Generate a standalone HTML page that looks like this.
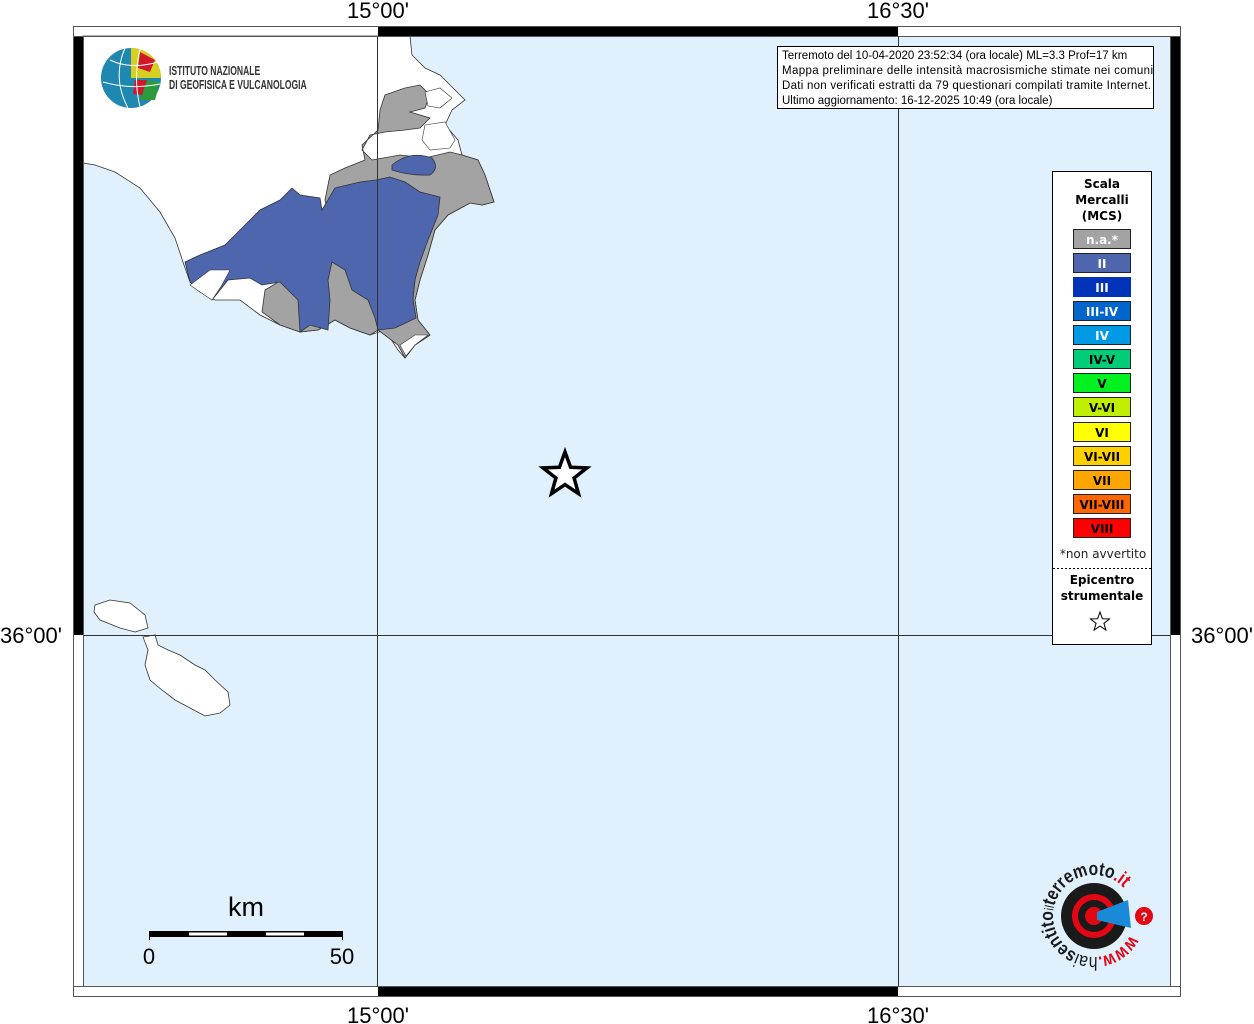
<!DOCTYPE html>
<html><head><meta charset="utf-8"><style>
html,body{margin:0;padding:0;background:#fff;width:1254px;height:1024px;overflow:hidden}
svg{display:block}
</style></head><body>
<svg width="1254" height="1024" viewBox="0 0 1254 1024" xmlns="http://www.w3.org/2000/svg" font-family="Liberation Sans, sans-serif">
<rect x="83" y="36" width="1088" height="951" fill="#e0f1fd"/>
<path d="M83,36 L410,36 L412,55 L425,68 L440,75 L455,90 L465,100 L452,110 L445,125 L458,140 L462,155 L478,160 L485,175 L494,202 L482,205 L470,203 L448,215 L435,230 L428,255 L420,280 L415,300 L418,320 L430,335 L415,345 L405,358 L398,350 L385,330 L370,335 L350,328 L335,320 L318,330 L300,332 L280,325 L260,315 L240,300 L215,300 L200,292 L190,282 L183,262 L175,238 L160,212 L140,188 L115,172 L95,165 L83,163 Z" fill="#fff" stroke="#333" stroke-width="0.8"/>
<path d="M385,95 L405,88 L420,85 L430,95 L425,108 L410,112 L430,118 L420,128 L405,130 L385,132 L370,135 L362,150 L372,160 L400,155 L425,158 L450,152 L462,155 L478,160 L485,175 L494,202 L482,205 L470,203 L448,215 L435,230 L428,255 L420,280 L415,300 L418,320 L430,335 L415,345 L405,358 L398,345 L378,330 L370,335 L350,328 L335,320 L318,330 L300,332 L280,325 L262,312 L265,290 L290,275 L320,270 L330,260 L325,245 L330,225 L325,200 L330,175 L345,168 L365,160 L362,145 L378,130 L380,110 Z" fill="#a3a3a3" stroke="#333" stroke-width="0.8"/>
<path d="M185,262 L200,255 L225,245 L248,222 L260,210 L280,200 L292,188 L300,195 L320,198 L322,210 L335,188 L360,182 L376,180 L390,177 L405,182 L420,192 L440,197 L438,215 L428,240 L420,262 L415,280 L413,300 L416,318 L395,328 L378,330 L375,318 L368,300 L352,290 L345,270 L332,262 L328,280 L330,300 L328,330 L310,325 L300,332 L298,300 L280,282 L262,285 L250,278 L228,280 L212,300 L200,290 L190,282 Z" fill="#4d66ad" stroke="#333" stroke-width="0.8"/>
<path d="M392,165 Q410,150 432,158 Q440,168 430,175 Q410,176 392,170 Z" fill="#4d66ad" stroke="#333" stroke-width="0.8"/>
<path d="M190,285 L210,270 L230,270 L222,285 L212,300 L200,292 Z" fill="#fff" stroke="#333" stroke-width="0.6"/>
<path d="M425,125 L445,122 L455,140 L450,148 L430,150 L422,140 Z" fill="#fff" stroke="#333" stroke-width="0.6"/>
<path d="M425,92 L440,88 L452,98 L440,108 L428,106 Z" fill="#fff" stroke="#333" stroke-width="0.6"/>
<path d="M400,345 L415,335 L428,335 L415,345 L406,356 Z" fill="#fff" stroke="#333" stroke-width="0.6"/>
<path d="M95,605 L110,600 L130,603 L145,615 L148,628 L135,632 L120,628 L100,620 L94,612 Z" fill="#fff" stroke="#333" stroke-width="0.8"/>
<path d="M143,637 L155,635 L158,645 L168,650 L180,655 L195,665 L205,670 L215,680 L228,692 L230,705 L220,713 L205,716 L190,708 L175,700 L162,690 L150,680 L145,665 L148,650 Z" fill="#fff" stroke="#333" stroke-width="0.8"/>
<line x1="377.5" y1="36" x2="377.5" y2="987" stroke="#333" stroke-width="1"/>
<line x1="898.5" y1="36" x2="898.5" y2="987" stroke="#333" stroke-width="1"/>
<line x1="83" y1="635.5" x2="1171" y2="635.5" stroke="#333" stroke-width="1"/>
<rect x="73.5" y="26.5" width="1107" height="970" fill="none" stroke="#555" stroke-width="1"/>
<rect x="83.5" y="36.5" width="1087" height="950" fill="none" stroke="#555" stroke-width="1"/>
<rect x="378" y="27" width="520" height="9" fill="#000"/>
<rect x="378" y="987" width="520" height="9" fill="#000"/>
<rect x="74" y="36" width="9" height="599" fill="#000"/>
<rect x="1171" y="36" width="9" height="599" fill="#000"/>
<line x1="73" y1="36.5" x2="83" y2="36.5" stroke="#555"/>
<line x1="1171" y1="36.5" x2="1181" y2="36.5" stroke="#555"/>
<line x1="73" y1="986.5" x2="83" y2="986.5" stroke="#555"/>
<line x1="1171" y1="986.5" x2="1181" y2="986.5" stroke="#555"/>
<g font-size="22" fill="#000" text-anchor="middle">
<text x="378" y="18">15°00'</text>
<text x="898" y="18">16°30'</text>
<text x="378" y="1023">15°00'</text>
<text x="898" y="1023">16°30'</text>
<text x="31" y="643">36°00'</text>
<text x="1222" y="643">36°00'</text>
</g>
<g>
<circle cx="131" cy="78" r="30" fill="#1e88b0"/>
<path d="M131,48 A30,30 0 0 1 161,78 L131,78 Z" fill="#d8d020"/>
<path d="M140,52 L155,60 L150,72 L138,68 Z" fill="#d0182a"/>
<path d="M145,80 L160,82 L155,100 L140,100 Z" fill="#2a9a3a"/>
<path d="M135,80 L147,80 L142,95 L133,94 Z" fill="#d0182a"/>
<path d="M110,60 Q131,70 158,62 M103,82 Q131,90 160,84 M125,48 Q112,78 128,108 M140,49 Q133,78 140,107" fill="none" stroke="#fff" stroke-width="1"/>
<g transform="translate(169,0) scale(0.66,1)" font-size="13" fill="#333" font-weight="bold">
<text x="0" y="75">ISTITUTO NAZIONALE</text>
<text x="0" y="89">DI GEOFISICA E VULCANOLOGIA</text>
</g>
</g>
<rect x="777.5" y="46.5" width="376" height="62" fill="#fff" stroke="#000" stroke-width="1"/>
<g font-size="11.5" fill="#000">
<text x="782" y="59">Terremoto del 10-04-2020 23:52:34 (ora locale) ML=3.3 Prof=17 km</text>
<text x="782" y="74" textLength="371">Mappa preliminare delle intensità macrosismiche stimate nei comuni</text>
<text x="782" y="89" textLength="369">Dati non verificati estratti da 79 questionari compilati tramite Internet.</text>
<text x="782" y="104">Ultimo aggiornamento: 16-12-2025 10:49 (ora locale)</text>
</g>
<rect x="1052.5" y="171.5" width="99" height="473" fill="#fff" stroke="#000" stroke-width="1"/>
<g font-family="DejaVu Sans, sans-serif" font-weight="bold" font-size="12" text-anchor="middle" fill="#000">
<text x="1102" y="188">Scala</text>
<text x="1102" y="204">Mercalli</text>
<text x="1102" y="220">(MCS)</text>
</g>
<g font-family="DejaVu Sans, sans-serif" font-weight="bold" font-size="12" text-anchor="middle">
<rect x="1073.5" y="229.5" width="57" height="19" fill="#a3a3a3" stroke="#222" stroke-width="1"/><text x="1102" y="244" fill="#fff">n.a.*</text>
<rect x="1073.5" y="253.5" width="57" height="19" fill="#4d66ad" stroke="#222" stroke-width="1"/><text x="1102" y="268" fill="#fff">II</text>
<rect x="1073.5" y="277.5" width="57" height="19" fill="#0033b8" stroke="#0033b8" stroke-width="1"/><text x="1102" y="292" fill="#fff">III</text>
<rect x="1073.5" y="301.5" width="57" height="19" fill="#0066cc" stroke="#222" stroke-width="1"/><text x="1102" y="316" fill="#fff">III-IV</text>
<rect x="1073.5" y="325.5" width="57" height="19" fill="#0099e6" stroke="#222" stroke-width="1"/><text x="1102" y="340" fill="#fff">IV</text>
<rect x="1073.5" y="349.5" width="57" height="19" fill="#00cc77" stroke="#222" stroke-width="1"/><text x="1102" y="364" fill="#000">IV-V</text>
<rect x="1073.5" y="373.5" width="57" height="19" fill="#00f020" stroke="#222" stroke-width="1"/><text x="1102" y="388" fill="#000">V</text>
<rect x="1073.5" y="397.5" width="57" height="19" fill="#c0f000" stroke="#222" stroke-width="1"/><text x="1102" y="412" fill="#000">V-VI</text>
<rect x="1073.5" y="422.5" width="57" height="19" fill="#ffff00" stroke="#222" stroke-width="1"/><text x="1102" y="437" fill="#000">VI</text>
<rect x="1073.5" y="446.5" width="57" height="19" fill="#ffd000" stroke="#222" stroke-width="1"/><text x="1102" y="461" fill="#000">VI-VII</text>
<rect x="1073.5" y="470.5" width="57" height="19" fill="#ffa500" stroke="#222" stroke-width="1"/><text x="1102" y="485" fill="#000">VII</text>
<rect x="1073.5" y="494.5" width="57" height="19" fill="#ff6600" stroke="#222" stroke-width="1"/><text x="1102" y="509" fill="#000">VII-VIII</text>
<rect x="1073.5" y="518.5" width="57" height="19" fill="#ff0000" stroke="#222" stroke-width="1"/><text x="1102" y="533" fill="#000">VIII</text>
</g>
<text x="1103" y="558" font-family="DejaVu Sans, sans-serif" font-size="12" text-anchor="middle" fill="#222">*non avvertito</text>
<line x1="1053" y1="568.5" x2="1151" y2="568.5" stroke="#000" stroke-dasharray="2,2"/>
<g font-family="DejaVu Sans, sans-serif" font-weight="bold" font-size="12" text-anchor="middle" fill="#000">
<text x="1102" y="584">Epicentro</text>
<text x="1102" y="600">strumentale</text>
</g>
<polygon points="1100,612 1102.4,618.7 1109.5,618.9 1103.9,623.3 1105.9,630.1 1100,626.1 1094.1,630.1 1096.1,623.3 1090.5,618.9 1097.6,618.7" fill="#fff" stroke="#000" stroke-width="1"/>
<polygon points="565,452 570.6,467.3 586.9,467.9 574.1,478 578.5,493.7 565,484.6 551.5,493.7 555.9,478 543.1,467.9 559.4,467.3" fill="#fff" stroke="#000" stroke-width="3.5"/>
<text x="246" y="916" font-size="27" text-anchor="middle" fill="#000">km</text>
<rect x="149" y="931" width="194" height="6" fill="#000"/>
<rect x="189" y="932.5" width="38" height="3" fill="#fff"/>
<rect x="266" y="932.5" width="38" height="3" fill="#fff"/>
<line x1="149.5" y1="931" x2="149.5" y2="940" stroke="#000"/>
<line x1="342.5" y1="931" x2="342.5" y2="940" stroke="#000"/>
<text x="149" y="964" font-size="22" text-anchor="middle" fill="#000">0</text>
<text x="342" y="964" font-size="22" text-anchor="middle" fill="#000">50</text>
<g>
<circle cx="1094" cy="916" r="33" fill="#1a1a1a"/>
<circle cx="1094" cy="916" r="22" fill="#e30613"/>
<circle cx="1094" cy="916" r="16" fill="#1a1a1a"/>
<circle cx="1094" cy="916" r="9" fill="#e30613"/>
<path d="M1097,912 L1128,900 L1131,928 L1097,920 Z" fill="#1a8ad8"/>
<circle cx="1144" cy="916" r="9" fill="#e30613"/>
<text x="1144" y="921" font-size="12" font-weight="bold" text-anchor="middle" fill="#fff">?</text>
<path id="arc" d="M1130.2,935.2 A41,41 0 1 1 1125.4,889.6" fill="none"/>
<text font-size="19" fill="#1a1a1a"><textPath href="#arc" textLength="206" lengthAdjust="spacingAndGlyphs"><tspan fill="#e30613" font-weight="bold">www.</tspan>hai<tspan font-weight="bold">sentito</tspan><tspan font-size="13">il</tspan><tspan font-weight="bold">terremoto</tspan><tspan fill="#e30613" font-weight="bold">.it</tspan></textPath></text>
</g>
</svg>
</body></html>
